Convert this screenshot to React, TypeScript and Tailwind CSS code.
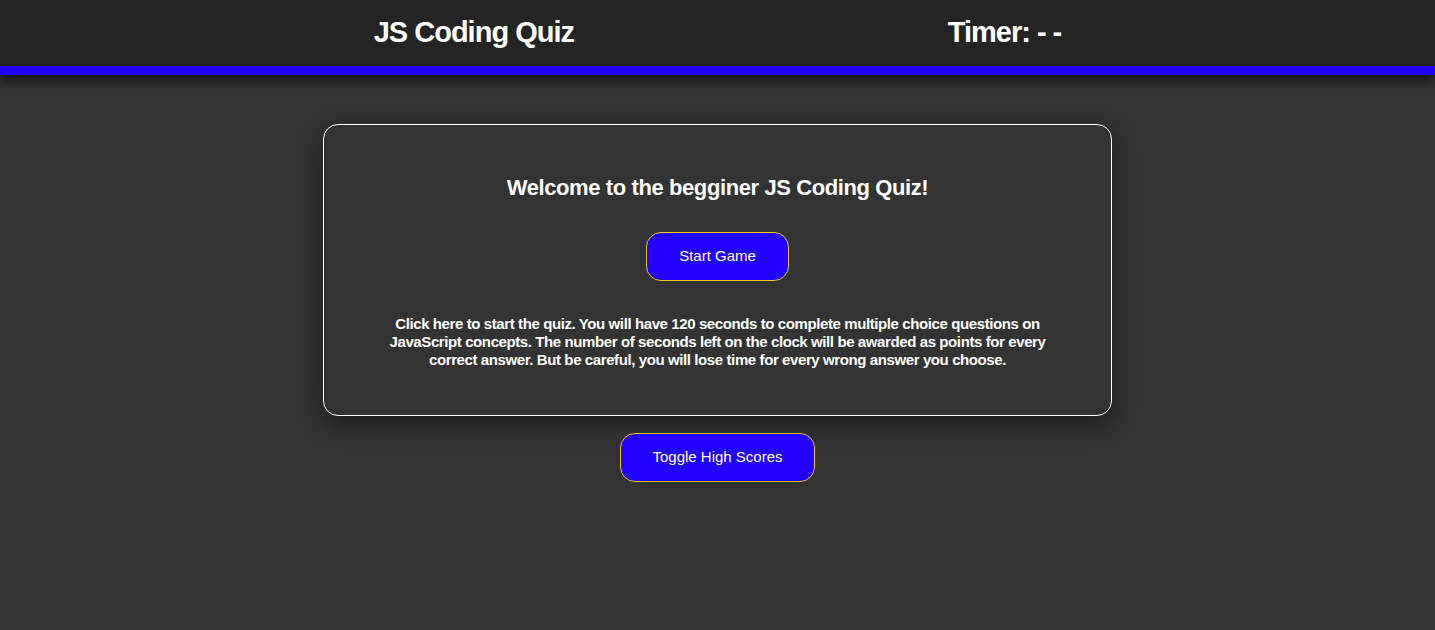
export default function App() {
  return (
    <div className="min-h-[630px] bg-[#333333] text-white font-['Liberation_Sans',Arial,sans-serif]">
      {/* Header */}
      <header className="relative z-10 shadow-[0_6px_10px_rgba(0,0,0,0.6)]">
        <div className="h-[66px] bg-[#242424] flex items-center justify-evenly">
          <h1 className="text-[29px] font-bold tracking-[-1px]">JS Coding Quiz</h1>
          <h2 className="text-[29px] font-bold tracking-[-1px]">Timer: - -</h2>
        </div>
        <div className="h-[9px] bg-[#2200ff]"></div>
      </header>

      <main className="flex flex-col items-center pt-[49px]">
        <section className="w-[789px] h-[292px] rounded-[15px] border border-white bg-[#333333] shadow-[0_8px_24px_rgba(0,0,0,0.45)] flex flex-col items-center pt-[49px]">
          <h3 className="text-[22px] font-bold leading-[28px] tracking-[-0.4px]">Welcome to the begginer JS Coding Quiz!</h3>
          <button className="mt-[30px] w-[143px] h-[49px] rounded-[15px] border border-[#f5c518] bg-[#2200ff] text-[15px] text-white">
            Start Game
          </button>
          <p className="mt-[34px] w-[672px] text-center text-[15px] leading-[18px] font-bold tracking-[-0.4px]">
            Click here to start the quiz. You will have 120 seconds to complete multiple choice questions on JavaScript concepts. The number of seconds left on the clock will be awarded as points for every correct answer. But be careful, you will lose time for every wrong answer you choose.
          </p>
        </section>
        <button className="mt-[17px] w-[195px] h-[49px] rounded-[15px] border border-[#f5c518] bg-[#2200ff] text-[15px] text-white">
          Toggle High Scores
        </button>
      </main>
    </div>
  );
}
